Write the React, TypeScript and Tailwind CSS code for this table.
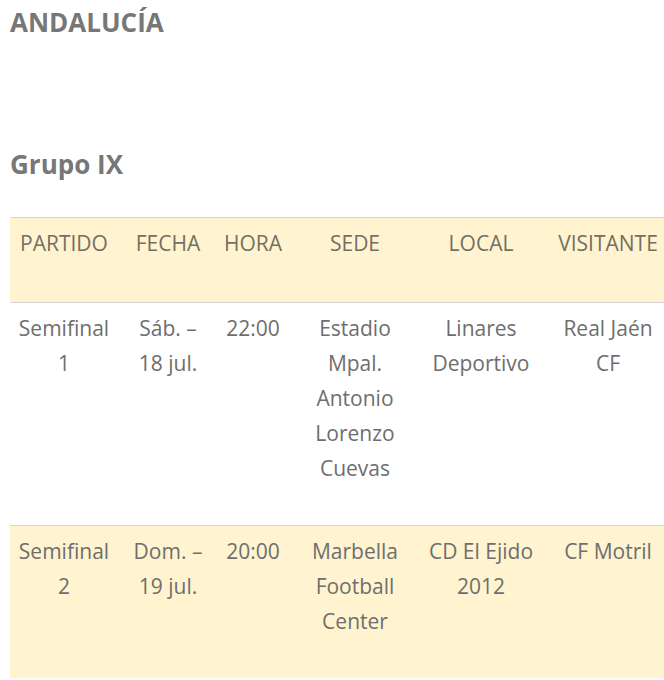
import React from "react";

const headers = ["PARTIDO", "FECHA", "HORA", "SEDE", "LOCAL", "VISITANTE"];
const widths = ["w-[108px]", "w-[100px]", "w-[70px]", "w-[134px]", "w-[118px]", "w-[136px]"];

const filas = [
  {
    cells: [
      ["Semifinal", "1"],
      ["Sáb. –", "18 jul."],
      ["22:00"],
      ["Estadio", "Mpal.", "Antonio", "Lorenzo", "Cuevas"],
      ["Linares", "Deportivo"],
      ["Real Jaén", "CF"],
    ],
    bg: "bg-white border-b",
  },
  {
    cells: [
      ["Semifinal", "2"],
      ["Dom. –", "19 jul."],
      ["20:00"],
      ["Marbella", "Football", "Center"],
      ["CD El Ejido", "2012"],
      ["CF Motril"],
    ],
    bg: "bg-[#fff4cf]",
  },
];

export default function App() {
  return (
    <div className="w-[664px] h-[680px] overflow-hidden bg-white text-[#6e6e6e] font-['Open_Sans',sans-serif]">
      <div className="px-[10px]">
        <h2 className="pt-[5px] text-[26px] leading-[34px] font-bold text-[#777]">ANDALUCÍA</h2>
        <h3 className="mt-[108px] text-[26px] leading-[34px] font-bold text-[#777]">Grupo IX</h3>
        <table className="mt-[36px] w-[666px] border-collapse text-[21px] leading-[35px] table-fixed">
          <thead>
            <tr className="bg-[#fff4cf] border-t border-b border-[#d4d4d4]">
              {headers.map((h, i) => (
                <th key={h} className={`${widths[i]} pt-[8px] pb-[41px] font-normal text-center text-[#746f63]`}>
                  {h}
                </th>
              ))}
            </tr>
          </thead>
          <tbody>
            {filas.map((f, r) => (
              <tr key={r} className={`${f.bg} border-[#d4d4d4]`}>
                {f.cells.map((lines, i) => (
                  <td key={i} className="pt-[8px] pb-[39px] align-top text-center">
                    {lines.map((l) => (
                      <div key={l}>{l}</div>
                    ))}
                  </td>
                ))}
              </tr>
            ))}
          </tbody>
        </table>
      </div>
    </div>
  );
}
